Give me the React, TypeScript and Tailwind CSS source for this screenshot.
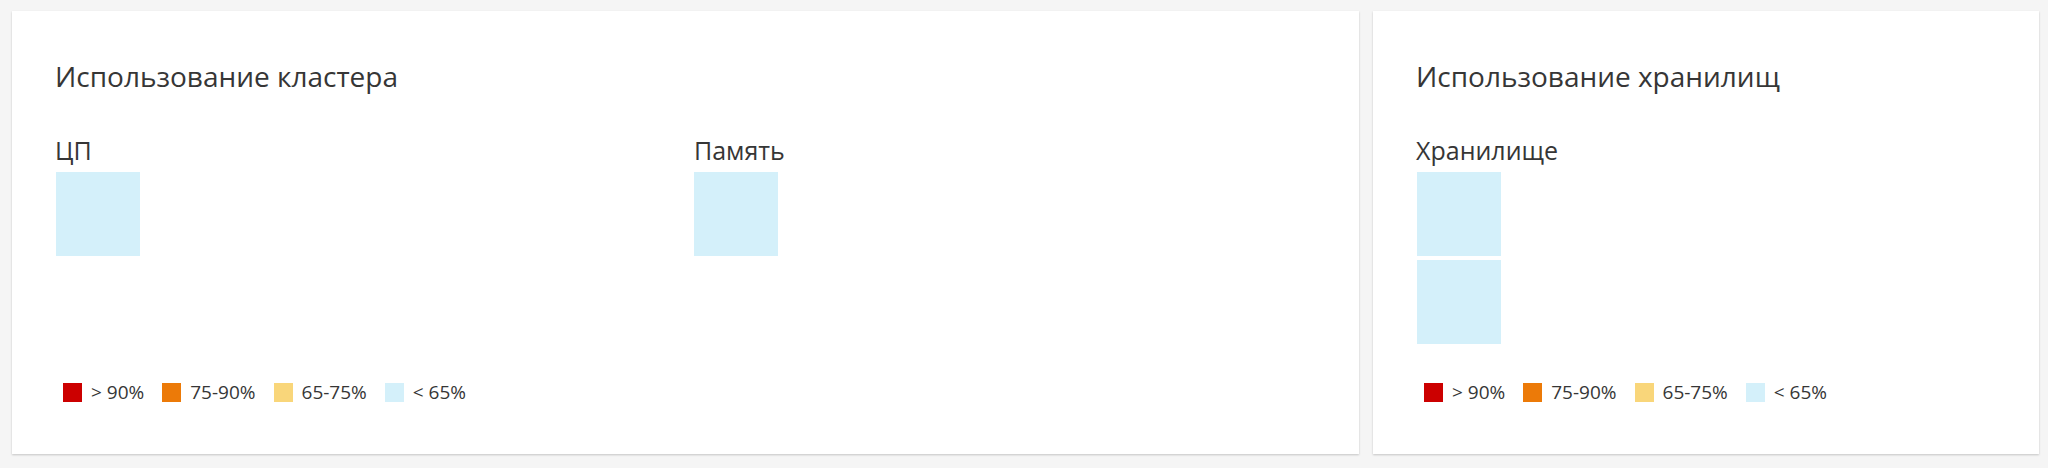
import React from "react";

const legend = [
  { c: "bg-[#cc0000]", t: "> 90%" },
  { c: "bg-[#ec7a08]", t: "75-90%" },
  { c: "bg-[#f9d67a]", t: "65-75%" },
  { c: "bg-[#d4f0fa]", t: "< 65%" },
];

function Legend() {
  return (
    <div className="mt-auto flex items-center pl-[8px]">
      {legend.map((l) => (
        <div key={l.t} className="flex items-center mr-[18px]">
          <span className={`w-[19px] h-[19px] ${l.c}`} />
          <span className="ml-[9px] text-[19px] leading-none text-[#363636]">{l.t}</span>
        </div>
      ))}
    </div>
  );
}

function Block() {
  return <div className="w-[84px] h-[84px] bg-[#d4f0fa]" />;
}

export default function App() {
  return (
    <div
      className="w-[2048px] h-[468px] bg-[#f5f5f5] pt-[11px] pl-[12px] pr-[9px] flex gap-[14px]"
      style={{ fontFamily: '"Open Sans", "Noto Sans", sans-serif' }}
    >
      <div className="w-[1347px] h-[443px] bg-white shadow-[0_1px_2px_rgba(3,3,3,0.2)] flex flex-col pt-[51px] pl-[43px] pb-[52px]">
        <h2 className="text-[28px] leading-none text-[#363636]">Использование кластера</h2>
        <div className="flex mt-[48px]">
          <div className="w-[639px]">
            <div className="text-[25px] leading-none text-[#363636]">ЦП</div>
            <div className="mt-[9px] ml-[1px]">
              <Block />
            </div>
          </div>
          <div>
            <div className="text-[25px] leading-none text-[#363636]">Память</div>
            <div className="mt-[9px]">
              <Block />
            </div>
          </div>
        </div>
        <Legend />
      </div>
      <div className="flex-1 h-[443px] bg-white shadow-[0_1px_2px_rgba(3,3,3,0.2)] flex flex-col pt-[51px] pl-[43px] pb-[52px]">
        <h2 className="text-[28px] leading-none text-[#363636]">Использование хранилищ</h2>
        <div className="mt-[48px]">
          <div className="text-[25px] leading-none text-[#363636]">Хранилище</div>
          <div className="mt-[9px] ml-[1px] flex flex-col gap-[4px]">
            <Block />
            <Block />
          </div>
        </div>
        <Legend />
      </div>
    </div>
  );
}
